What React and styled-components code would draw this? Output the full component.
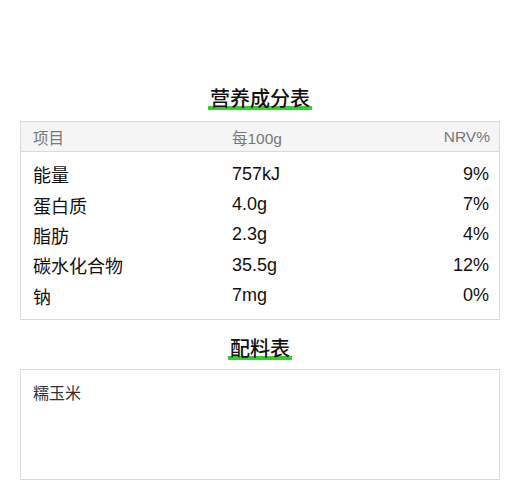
import styled, { createGlobalStyle } from "styled-components";

const GlobalStyle = createGlobalStyle`
  body {
    margin: 0;
    background: #fff;
    font-family: "Liberation Sans", "Noto Sans CJK SC", sans-serif;
  }
`;

const nutrients = [
  { name: "能量", value: "757kJ", nrv: "9%" },
  { name: "蛋白质", value: "4.0g", nrv: "7%" },
  { name: "脂肪", value: "2.3g", nrv: "4%" },
  { name: "碳水化合物", value: "35.5g", nrv: "12%" },
  { name: "钠", value: "7mg", nrv: "0%" },
];

export default function App() {
  return (
    <>
      <GlobalStyle />
      <Page>
        <Heading $after={10}>
          <Title>营养成分表</Title>
        </Heading>
        <Table>
          <HeadRow>
            <span>项目</span>
            <span>每100g</span>
            <Right>NRV%</Right>
          </HeadRow>
          <Body>
            {nutrients.map((item) => (
              <Row key={item.name}>
                <span>{item.name}</span>
                <span>{item.value}</span>
                <Right>{item.nrv}</Right>
              </Row>
            ))}
          </Body>
        </Table>
        <Heading $before={17} $after={8}>
          <Title>配料表</Title>
        </Heading>
        <Ingredients>糯玉米</Ingredients>
      </Page>
    </>
  );
}

const Page = styled.div`
  width: 480px;
  padding: 87px 20px 20px;
`;

const Heading = styled.div`
  display: flex;
  justify-content: center;
  margin-top: ${(p) => p.$before || 0}px;
  margin-bottom: ${(p) => p.$after || 0}px;
`;

const Title = styled.h2`
  margin: 0;
  padding: 0 2px;
  font-size: 20px;
  line-height: 24px;
  font-weight: 500;
  color: #111;
  background: linear-gradient(transparent 19px, #2fd12a 19px, #2fd12a 23px, transparent 23px);
  border-radius: 2px;
`;

const Table = styled.div`
  border: 1px solid #d9d9d9;
`;

const HeadRow = styled.div`
  display: grid;
  grid-template-columns: 199px 1fr auto;
  align-items: center;
  height: 29px;
  padding: 0 9px 0 12px;
  background: #f5f5f5;
  border-bottom: 1px solid #d9d9d9;
  font-size: 15.5px;
  color: #777;
`;

const Body = styled.div`
  padding: 7px 0 8px;
`;

const Row = styled.div`
  display: grid;
  grid-template-columns: 199px 1fr auto;
  align-items: center;
  height: 30.4px;
  padding: 0 10px 0 12px;
  font-size: 18px;
  color: #111;
`;

const Right = styled.span`
  text-align: right;
`;

const Ingredients = styled.div`
  box-sizing: border-box;
  height: 111px;
  padding: 10px 12px 0;
  border: 1px solid #d9d9d9;
  font-size: 16px;
  color: #333;
`;
